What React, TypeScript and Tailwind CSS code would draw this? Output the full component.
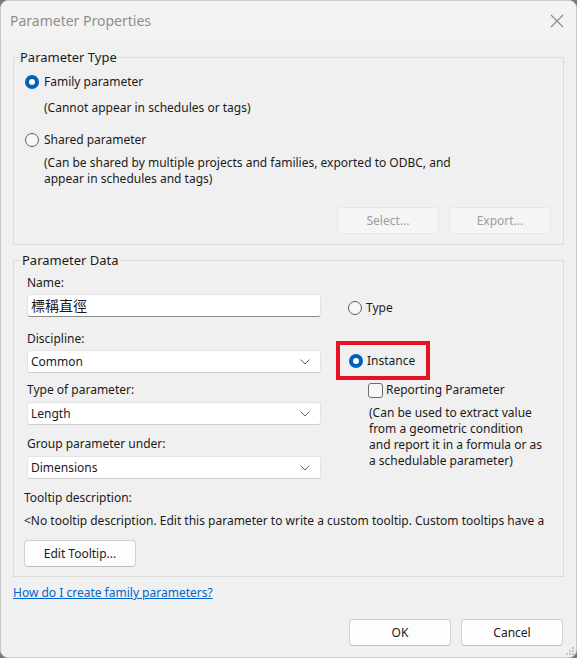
import React from 'react';

const font = { fontFamily: '"Noto Sans", "Noto Sans CJK TC", sans-serif' };

function Radio({ checked }: { checked?: boolean }) {
  return checked ? (
    <span className="w-[14px] h-[14px] rounded-full bg-[#005fb8] flex items-center justify-center shrink-0">
      <span className="w-[6px] h-[6px] rounded-full bg-white" />
    </span>
  ) : (
    <span className="w-[14px] h-[14px] rounded-full border border-[#5d5d5d] bg-[#f7f7f7] shrink-0" />
  );
}

function Chevron() {
  return (
    <svg width="10" height="6" viewBox="0 0 10 6" className="shrink-0">
      <path d="M0.5 0.5 L5 5 L9.5 0.5" fill="none" stroke="#606060" strokeWidth="1" />
    </svg>
  );
}

function Select({ value }: { value: string }) {
  return (
    <div className="h-[23px] w-[294px] bg-white border border-[#e3e3e3] border-b-[#cfcfcf] rounded-[3px] flex items-center justify-between pl-[3px] pr-[10px]">
      <span>{value}</span>
      <Chevron />
    </div>
  );
}

function Button({ label, width, disabled }: { label: string; width: string; disabled?: boolean }) {
  return (
    <div
      className={
        disabled
          ? `${width} h-[27px] rounded-[4px] bg-[#f5f5f5] border border-[#e6e6e6] flex items-center justify-center text-[#9d9d9d]`
          : `${width} h-[27px] rounded-[4px] bg-[#fdfdfd] border border-[#d0d0d0] border-b-[#bcbcbc] flex items-center justify-center text-[#1b1b1b]`
      }
    >
      {label}
    </div>
  );
}

export default function App() {
  return (
    <div className="w-[577px] h-[658px] bg-[#6b7a8a]" style={font}>
      <div className="w-[577px] h-[658px] bg-[#f0f0f0] rounded-t-[8px] rounded-b-[8px] border border-[#c9c9c9] flex flex-col text-[12px] leading-[16px] text-[#1b1b1b] overflow-hidden relative">
        {/* title bar */}
        <div className="h-[40px] shrink-0 bg-[#f3f3f3] flex items-center justify-between pl-[9px] pr-[12px]">
          <span className="text-[14px] text-[#8f8f8f]">Parameter Properties</span>
          <svg width="14" height="14" viewBox="0 0 14 14">
            <path d="M1 1 L13 13 M13 1 L1 13" stroke="#8a8a8a" strokeWidth="1.2" />
          </svg>
        </div>

        <div className="flex flex-col px-[12px]">
          {/* Parameter Type */}
          <fieldset className="mt-[8px] border border-[#dcdcdc] pl-[11px] pr-[12px] pb-[10px]">
            <legend className="-ml-[6px] px-[1px] text-[13px]">Parameter Type</legend>
            <div className="mt-[9px] flex items-center gap-[5px]">
              <Radio checked />
              <span>Family parameter</span>
            </div>
            <div className="mt-[10px] pl-[19px]">(Cannot appear in schedules or tags)</div>
            <div className="mt-[16px] flex items-center gap-[5px]">
              <Radio />
              <span>Shared parameter</span>
            </div>
            <div className="mt-[7px] pl-[19px]">
              <div>(Can be shared by multiple projects and families, exported to ODBC, and</div>
              <div>appear in schedules and tags)</div>
            </div>
            <div className="mt-[20px] flex justify-end gap-[10px]">
              <Button label="Select..." width="w-[102px]" disabled />
              <Button label="Export..." width="w-[102px]" disabled />
            </div>
          </fieldset>

          {/* Parameter Data */}
          <fieldset className="mt-[7px] border border-[#dcdcdc] pl-[10px] pr-[12px] pb-[9px]">
            <legend className="-ml-[3px] px-[1px] text-[13px]">Parameter Data</legend>
            <div className="flex">
              <div className="flex flex-col pl-[3px] w-[312px]">
                <div className="mt-[7px]">Name:</div>
                <div className="mt-[3px] h-[23px] w-[294px] bg-white border border-[#e3e3e3] border-b-[#8a8a8a] rounded-[3px] flex items-center pl-[3px] text-[14px]">
                  標稱直徑
                </div>
                <div className="mt-[14px]">Discipline:</div>
                <div className="mt-[3px]">
                  <Select value="Common" />
                </div>
                <div className="mt-[9px]">Type of parameter:</div>
                <div className="mt-[4px]">
                  <Select value="Length" />
                </div>
                <div className="mt-[11px]">Group parameter under:</div>
                <div className="mt-[4px]">
                  <Select value="Dimensions" />
                </div>
              </div>
              <div className="flex flex-col">
                <div className="mt-[32px] ml-[12px] flex items-center gap-[4px]">
                  <Radio />
                  <span>Type</span>
                </div>
                <div className="mt-[25px] w-[94px] h-[39px] border-[4px] border-[#e81123] flex items-center pl-[9px] gap-[4px]">
                  <Radio checked />
                  <span>Instance</span>
                </div>
                <div className="mt-[2px] ml-[32px] flex items-center gap-[3px]">
                  <span className="w-[15px] h-[15px] rounded-[3px] border border-[#6b6b6b] bg-[#f7f7f7]" />
                  <span>Reporting Parameter</span>
                </div>
                <div className="mt-[7px] ml-[33px]">
                  <div>(Can be used to extract value</div>
                  <div>from a geometric condition</div>
                  <div>and report it in a formula or as</div>
                  <div>a schedulable parameter)</div>
                </div>
              </div>
            </div>
            <div className="mt-[11px]">Tooltip description:</div>
            <div className="mt-[7px] whitespace-nowrap">
              &lt;No tooltip description. Edit this parameter to write a custom tooltip. Custom tooltips have a
            </div>
            <div className="mt-[11px]">
              <Button label="Edit Tooltip..." width="w-[112px]" />
            </div>
          </fieldset>

          <div className="mt-[8px]">
            <span className="text-[#0066cc] underline">How do I create family parameters?</span>
          </div>

          <div className="mt-[18px] flex justify-end gap-[10px] pr-[1px]">
            <Button label="OK" width="w-[102px]" />
            <Button label="Cancel" width="w-[102px]" />
          </div>
        </div>

        {/* resize grip */}
        <svg width="10" height="10" viewBox="0 0 10 10" className="absolute right-[1px] bottom-[1px]">
          <rect x="7" y="1" width="2" height="2" fill="#c4c4c4" />
          <rect x="4" y="4" width="2" height="2" fill="#c4c4c4" />
          <rect x="7" y="4" width="2" height="2" fill="#c4c4c4" />
          <rect x="1" y="7" width="2" height="2" fill="#c4c4c4" />
          <rect x="4" y="7" width="2" height="2" fill="#c4c4c4" />
          <rect x="7" y="7" width="2" height="2" fill="#c4c4c4" />
        </svg>
      </div>
    </div>
  );
}
